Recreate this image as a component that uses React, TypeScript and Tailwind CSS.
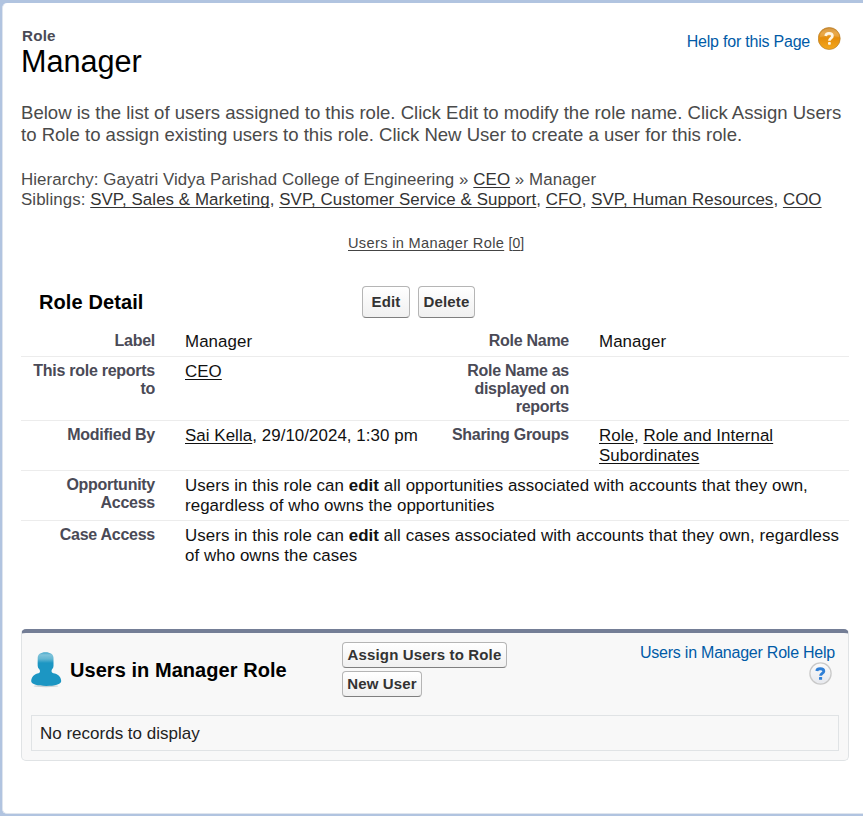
import React from "react";

const Link = ({ children }: { children: React.ReactNode }) => (
  <a className="underline decoration-1 underline-offset-[2px] [text-decoration-skip-ink:none]">{children}</a>
);

const Label = ({ children, className = "" }: { children?: React.ReactNode; className?: string }) => (
  <div className={`shrink-0 pt-[5px] text-right text-[16px] leading-[18px] font-bold tracking-[-0.27px] whitespace-nowrap text-[#4a4a56] ${className}`}>
    {children}
  </div>
);

const Value = ({ children, className = "" }: { children?: React.ReactNode; className?: string }) => (
  <div className={`pl-[30px] pt-[5px] text-[16.9px] leading-5 tracking-[0.06px] whitespace-nowrap text-[#111] ${className}`}>{children}</div>
);

const Row = ({ children, className = "" }: { children: React.ReactNode; className?: string }) => (
  <div className={`flex border-[#ececec] ${className}`}>{children}</div>
);

const Button = ({ children, className = "" }: { children: React.ReactNode; className?: string }) => (
  <button
    className={`flex shrink-0 items-center justify-center rounded-[4px] border border-[#b5b5b5] border-b-[#7f7f7f] bg-linear-to-b from-white to-[#f0f0f0] text-[15px] font-bold tracking-[0.15px] whitespace-nowrap text-[#333] ${className}`}
  >
    {children}
  </button>
);

const PageHelpIcon = () => (
  <svg className="ml-2 size-[23px]" viewBox="0 0 23 23">
    <defs>
      <linearGradient id="orange" x1="0" y1="0" x2="0" y2="1">
        <stop offset="0" stopColor="#c98324" />
        <stop offset=".25" stopColor="#e59a2c" />
        <stop offset=".5" stopColor="#e58e0c" />
        <stop offset="1" stopColor="#f5a81c" />
      </linearGradient>
    </defs>
    <circle cx="11.2" cy="11.5" r="11" fill="url(#orange)" stroke="#b9822f" strokeWidth=".7" />
    <path d="M2 10a9.5 8.8 0 0 1 19 0Q12 8 2 10Z" fill="#fff" opacity=".15" />
    <path d="M7.7 9C7.9 7.1 9.4 6.4 11 6.4c2.2 0 3.4 1 3.4 2.6 0 2.2-3 2.4-3 4.8" fill="none" stroke="#fff6e4" strokeWidth="2.7" />
    <rect x="10" y="14.9" width="2.8" height="2.8" rx=".8" fill="#fff6e4" />
  </svg>
);

const ListHelpIcon = () => (
  <svg className="size-[23px]" viewBox="0 0 23 23">
    <defs>
      <linearGradient id="silver" x1="0" y1="0" x2="0" y2="1">
        <stop offset="0" stopColor="#fbfbfb" />
        <stop offset="1" stopColor="#e6e8ed" />
      </linearGradient>
    </defs>
    <circle cx="11.5" cy="11.5" r="10.6" fill="url(#silver)" stroke="#c9c9c9" strokeWidth="1.3" />
    <path d="M7.8 9C8 7.3 9.4 6.8 11.2 6.8c2.2 0 3.6 .9 3.6 2.4 0 2.2-3.2 2.2-3.2 4.5" fill="none" stroke="#2f7fd6" strokeWidth="2.9" />
    <rect x="10" y="15" width="3.1" height="2.8" rx=".5" fill="#2f7fd6" />
  </svg>
);

const UserIcon = () => (
  <svg className="h-[37px] w-[31px]" viewBox="0 0 31 37">
    <defs>
      <linearGradient id="head" x1="0" y1="0" x2="0" y2="1">
        <stop offset="0" stopColor="#3fa5c9" />
        <stop offset=".08" stopColor="#7fc3da" />
        <stop offset=".2" stopColor="#62b6d2" />
        <stop offset=".32" stopColor="#1c96c3" />
        <stop offset="1" stopColor="#1c96c3" />
      </linearGradient>
    </defs>
    <ellipse cx="15" cy="35" rx="12.5" ry="1.2" fill="#c9d2d5" />
    <path
      d="M14.5 1.2C19.4 1.2 22.5 3.4 22.5 6.8c0 3 .1 5 0 8.2-.1 2.6-2 3.4-2 4.9 0 1.6 1.2 2 3.4 2.7 4 1.3 6.3 4.2 6.3 7.7 0 3-6.6 4.7-14.9 4.7S.2 33.3.2 30.3c0-3.5 2.3-6.4 6.1-7.7C8.3 21.9 9 21.5 9 19.9c0-1.5-2.2-2.3-2.3-4.9-.1-3.2 0-5.2 0-8.2 0-3.4 2.9-5.6 7.8-5.6Z"
      fill="url(#head)"
    />
  </svg>
);

export default function App() {
  return (
    <div className="h-[816px] w-[863px] overflow-hidden bg-[#b1c4e0] pt-[3px] pl-[2px] font-['Liberation_Sans',Arial,sans-serif]">
      <main className="flex h-[811px] flex-col rounded-l-[5px] border-b border-l border-[#dfe5ee] bg-white pr-[14px] pl-[18px]">
        <header className="flex h-[97px] justify-between">
          <div className="pt-6">
            <div className="pl-[1px] text-[15.2px] leading-[18px] font-bold tracking-[0.2px] text-[#4a4a56]">Role</div>
            <h1 className="text-[30.6px] leading-[33px] text-black">Manager</h1>
          </div>
          <div className="flex h-[23px] pt-6 pr-2">
            <span className="pt-[5px] text-[16px] leading-[19px] tracking-[-0.22px] text-[#015ba7]">Help for this Page</span>
            <PageHelpIcon />
          </div>
        </header>

        <p className="h-[67px] pt-[2px] text-[18.57px] leading-[22px] whitespace-nowrap text-[#4a4a4a]">
          Below is the list of users assigned to this role. Click Edit to modify the role name. Click Assign Users
          <br />
          to Role to assign existing users to this role. Click New User to create a user for this role.
        </p>

        <div className="h-[66px] pt-[3px] text-[16.9px] leading-5 tracking-[0.065px] whitespace-nowrap text-[#4a4a4a]">
          <div>
            Hierarchy: Gayatri Vidya Parishad College of Engineering » <span className="text-[#333]"><Link>CEO</Link></span> » Manager
          </div>
          <div>
            Siblings:{" "}
            <span className="text-[#333]">
              <Link>SVP, Sales &amp; Marketing</Link>, <Link>SVP, Customer Service &amp; Support</Link>, <Link>CFO</Link>,{" "}
              <Link>SVP, Human Resources</Link>, <Link>COO</Link>
            </span>
          </div>
        </div>

        <div className="h-[53px] pl-[327px] text-[14.6px] leading-[20px] tracking-[0.33px] whitespace-nowrap text-[#444]">
          <Link>Users in Manager Role</Link> <span className="text-[14px] tracking-[0px]">[<Link>0</Link>]</span>
        </div>

        <section>
          <div className="flex h-[41px]">
            <h2 className="w-[341px] pt-1 pl-[18px] text-[20px] leading-6 font-bold tracking-[0.1px] text-black">Role Detail</h2>
            <Button className="mr-2 h-8 w-12">Edit</Button>
            <Button className="h-8 w-[57px]">Delete</Button>
          </div>
          <Row className="h-[30px] border-b">
            <Label className="w-[134px]">Label</Label>
            <Value className="w-[264px]">Manager</Value>
            <Label className="w-[150px]">Role Name</Label>
            <Value>Manager</Value>
          </Row>
          <Row className="h-16 border-b">
            <Label className="w-[134px]">This role reports<br />to</Label>
            <Value className="w-[264px]"><Link>CEO</Link></Value>
            <Label className="w-[150px]">Role Name as<br />displayed on<br />reports</Label>
          </Row>
          <Row className="h-[50px] border-b">
            <Label className="w-[134px]">Modified By</Label>
            <Value className="w-[264px]"><Link>Sai Kella</Link>, 29/10/2024, 1:30 pm</Value>
            <Label className="w-[150px]">Sharing Groups</Label>
            <Value><Link>Role</Link>, <Link>Role and Internal<br />Subordinates</Link></Value>
          </Row>
          <Row className="h-[50px] border-b">
            <Label className="w-[134px]">Opportunity<br />Access</Label>
            <Value>Users in this role can <b>edit</b> all opportunities associated with accounts that they own,<br />regardless of who owns the opportunities</Value>
          </Row>
          <Row className="h-[108px]">
            <Label className="w-[134px]">Case Access</Label>
            <Value>Users in this role can <b>edit</b> all cases associated with accounts that they own, regardless<br />of who owns the cases</Value>
          </Row>
        </section>

        <section className="h-[132px] w-[828px] rounded-[5px] border border-t-4 border-[#e0e3e5] border-t-[#747e96] bg-[#f8f8f8] px-[9px]">
          <div className="flex h-[82px]">
            <div className="pt-[18px]"><UserIcon /></div>
            <h2 className="w-[280px] pt-[25px] pl-2 text-[20px] leading-6 font-bold tracking-[0.05px] whitespace-nowrap text-black">Users in Manager Role</h2>
            <div className="flex flex-col gap-[3px] pt-[9px]">
              <Button className="h-[26px] w-[165px]">Assign Users to Role</Button>
              <Button className="h-[26px] w-20">New User</Button>
            </div>
            <div className="ml-auto flex flex-col items-end pt-[10px] pr-1">
              <span className="text-[16px] leading-[19px] tracking-[-0.23px] whitespace-nowrap text-[#015ba7]">Users in Manager Role Help</span>
              <div className="pr-[3px]"><ListHelpIcon /></div>
            </div>
          </div>
          <div className="h-9 border border-[#e0e3e5] pt-2 pl-2 text-[17px] leading-5 text-[#222]">No records to display</div>
        </section>
      </main>
    </div>
  );
}
